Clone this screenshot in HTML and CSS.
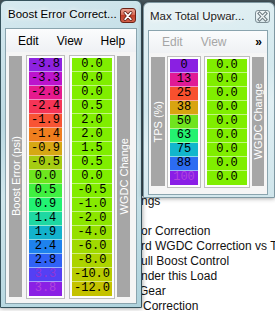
FILE: index.html
```html
<!DOCTYPE html>
<html>
<head>
    <title>Boost Error Correction</title>
    <meta name="viewport" content="width=device-width, initial-scale=1">
    <link rel="stylesheet" href="styles.css">
</head>
<body>
<div class="desktop">
    <ul class="tree">
        <li>ngs</li>
        <li>&nbsp;</li>
        <li>or Correction</li>
        <li>rd WGDC Correction vs TPS</li>
        <li>ull Boost Control</li>
        <li>nder this Load</li>
        <li class="nudge">Gear</li>
        <li class="gap">Correction</li>
    </ul>

    <div class="win active win-boost">
        <div class="titlebar">
            <span class="title">Boost Error Correct...</span>
            <span class="close">
                <svg width="15" height="14" viewBox="0 0 15 14"><path d="M4.5 3.5 L10.5 10.5 M10.5 3.5 L4.5 10.5" stroke="#5b1c12" stroke-width="3.6" stroke-linecap="round"/><path d="M4.5 3.5 L10.5 10.5 M10.5 3.5 L4.5 10.5" stroke="#fff" stroke-width="2" stroke-linecap="round"/></svg>
            </span>
        </div>
        <div class="client">
            <div class="menubar">
                <span>Edit</span><span>View</span><span>Help</span>
            </div>
            <div class="table">
                <div class="axis"><span>Boost Error (psi)</span></div>
                <div class="col narrow" id="boostCol"></div>
                <div class="col wide" id="boostWgdc"></div>
                <div class="axis"><span>WGDC Change</span></div>
            </div>
        </div>
    </div>

    <div class="win inactive win-tps">
        <div class="titlebar">
            <span class="title">Max Total Upwar...</span>
            <span class="close">
                <svg width="13" height="11" viewBox="0 0 13 11"><path d="M3.5 2.5 L9.5 8.5 M9.5 2.5 L3.5 8.5" stroke="#6f7c82" stroke-width="3.4" stroke-linecap="square"/><path d="M3.5 2.5 L9.5 8.5 M9.5 2.5 L3.5 8.5" stroke="#f3f7f8" stroke-width="1.3" stroke-linecap="square"/></svg>
            </span>
        </div>
        <div class="client">
            <div class="menubar">
                <span class="off">Edit</span><span class="off">View</span><span class="more">&raquo;</span>
            </div>
            <div class="table">
                <div class="axis"><span>TPS (%)</span></div>
                <div class="col tps" id="tpsCol"></div>
                <div class="col wide" id="tpsWgdc"></div>
                <div class="axis"><span>WGDC Change</span></div>
            </div>
        </div>
    </div>
</div>

<script>
    var boostRows = [
        ["-3.8", "#8d22e0"], ["-3.3", "#bc14cc"], ["-2.8", "#e61a8e"], ["-2.4", "#f53456"],
        ["-1.9", "#f85434"], ["-1.4", "#f07e1e"], ["-0.9", "#d6a814"], ["-0.5", "#a6cc12"],
        ["0.0", "#6ee61e"], ["0.5", "#40f040"], ["0.9", "#22f272"], ["1.4", "#1ed8a2"],
        ["1.9", "#12b2cc"], ["2.4", "#1e82ee"], ["2.8", "#3062f6"], ["3.3", "#5440f4", "#9434d4"],
        ["3.8", "#8a20e4", "#b044dc"]
    ];
    var wgdcRows = [
        ["0.0", "#80ee00"], ["0.0", "#80ee00"], ["0.0", "#80ee00"], ["0.5", "#80ee00"],
        ["2.0", "#80ee00"], ["2.0", "#80ee00"], ["1.5", "#80ee00"], ["0.5", "#80ee00"],
        ["0.0", "#80ee00"], ["-0.5", "#82ec00"], ["-1.0", "#86ea00"], ["-2.0", "#8ce600"],
        ["-4.0", "#96e000"], ["-6.0", "#a0da00"], ["-8.0", "#acd400"], ["-10.0", "#b8cc00"],
        ["-12.0", "#c4c200"]
    ];
    var tpsRows = [
        ["0", "#8a20e2"], ["13", "#e01a96"], ["25", "#f8502e"], ["38", "#d8a410"],
        ["50", "#70e41e"], ["63", "#24f270"], ["75", "#12b6cc"], ["88", "#2c6cf2"],
        ["100", "#8a1ee6", "#b044dc"]
    ];

    function fillColumn(id, rows) {
        var col = document.getElementById(id);
        for (var i = 0; i < rows.length; i++) {
            var cell = document.createElement("div");
            cell.className = "cell";
            cell.textContent = rows[i][0];
            cell.style.background = rows[i][1];
            if (rows[i][2]) {
                cell.style.color = rows[i][2];
            }
            col.appendChild(cell);
        }
    }

    fillColumn("boostCol", boostRows);
    fillColumn("boostWgdc", wgdcRows);
    fillColumn("tpsCol", tpsRows);
    fillColumn("tpsWgdc", tpsRows.map(function () { return ["0.0", "#80ee00"]; }));
</script>
</body>
</html>
```

FILE: styles.css
```css
body {
    margin: 0;
    font-family: "Liberation Sans", Arial, sans-serif;
}
.desktop {
    position: relative;
    width: 275px;
    height: 311px;
    overflow: hidden;
    background: linear-gradient(to bottom, #4b5b62 0, #4b5b62 196px, #fff 196px);
}
.tree {
    list-style: none;
    margin: 0;
    padding: 194px 0 0 141px;
    font-size: 12px;
    line-height: 15px;
    color: #111;
    white-space: nowrap;
}
.tree .nudge {
    margin-left: -2px;
}
.tree .gap {
    margin-left: 2px;
}

/* windows */
.win {
    position: absolute;
    box-sizing: border-box;
    border: 1px solid #36525c;
    border-radius: 6px 6px 0 0;
    padding: 0 4px 3px 4px;
    display: flex;
    flex-direction: column;
    box-shadow: 0 0 5px rgba(0, 0, 0, 0.45);
}
.win.active {
    background: linear-gradient(160deg, #d7eaf0 0, #bcd9e2 35%, #cfe6ec 55%, #aed2dc 100%);
}
.win.inactive {
    border-color: #7f98a2;
    background: linear-gradient(160deg, #e6f2f5 0, #d4e9ee 45%, #e0eff3 60%, #cfe5eb 100%);
}
.win-boost {
    left: 0;
    top: 0;
    width: 142px;
    height: 308px;
}
.win-tps {
    left: 143px;
    top: 2px;
    width: 132px;
    height: 196px;
    padding-right: 6px;
    padding-bottom: 2px;
}
.titlebar {
    position: relative;
    height: 27px;
    flex: none;
}
.title {
    display: block;
    padding-left: 3px;
    font-size: 11.5px;
    line-height: 26px;
    color: #000;
    white-space: nowrap;
    text-shadow: 0 0 4px #fff, 0 0 7px #fff;
}
.win-tps .title {
    padding-left: 2px;
    color: #222;
}
.close {
    position: absolute;
    top: 7px;
    right: 1px;
    box-sizing: border-box;
    width: 16px;
    height: 15px;
    border: 1px solid #6b2217;
    border-radius: 3px;
    background: linear-gradient(to bottom, #eaa595 0, #d66a55 45%, #c2402a 50%, #d2604a 100%);
    display: flex;
    align-items: center;
    justify-content: center;
}
.close svg {
    display: block;
}
.inactive .close {
    top: 7px;
    right: -2px;
    width: 15px;
    height: 13px;
    border-color: #7d8e95;
    background: linear-gradient(to bottom, #f4f9fa, #dbe9ed);
}

/* client area */
.client {
    flex: 1;
    display: flex;
    flex-direction: column;
    border: 1px solid #8aa4ae;
    background: #f5f5f5;
}
.menubar {
    display: flex;
    gap: 18px;
    height: 23px;
    padding-left: 12px;
    align-items: center;
    font-size: 12px;
    color: #000;
    background: linear-gradient(to bottom, #fbfcfd, #eff1f4);
}
.win-tps .menubar {
    height: 22px;
    padding-left: 13px;
    padding-right: 5px;
}
.menubar .off {
    color: #a6a6a6;
}
.menubar .more {
    margin-left: auto;
    font-weight: bold;
    font-size: 12px;
}

/* table */
.table {
    flex: 1;
    display: flex;
    align-items: stretch;
    padding: 3px 0 4px 3px;
}
.win-tps .table {
    padding: 3px 0 6px 2px;
}
.axis {
    width: 13px;
    margin: 1px 0 2px 0;
    background: #a6a6a6;
    display: flex;
    align-items: center;
    justify-content: center;
}
.axis span {
    writing-mode: vertical-rl;
    transform: rotate(180deg);
    font-size: 11px;
    color: #fff;
    white-space: nowrap;
}
.col {
    align-self: flex-start;
    border: 1px solid #bdbdbd;
    padding: 2px;
    background: #fdfdfd;
}
.win-boost .col.narrow {
    margin-left: 4px;
    width: 33px;
}
.win-boost .col.wide {
    margin-left: 4px;
    width: 40px;
}
.win-boost .axis:last-child {
    margin-left: 2px;
}
.win-tps .axis:first-child {
    width: 14px;
}
.win-tps .col.tps {
    margin-left: 2px;
    width: 28px;
}
.win-tps .col.wide {
    margin-left: 3px;
    width: 40px;
}
.win-tps .axis:last-child {
    margin-left: 2px;
    width: 12px;
}
.cell {
    box-sizing: border-box;
    height: 14px;
    border-bottom: 1px solid rgba(255, 255, 255, 0.5);
    font-family: "Liberation Mono", "Courier New", monospace;
    font-size: 12px;
    line-height: 13px;
    text-align: center;
    color: #000;
}
.cell:last-child {
    border-bottom: none;
}
```
